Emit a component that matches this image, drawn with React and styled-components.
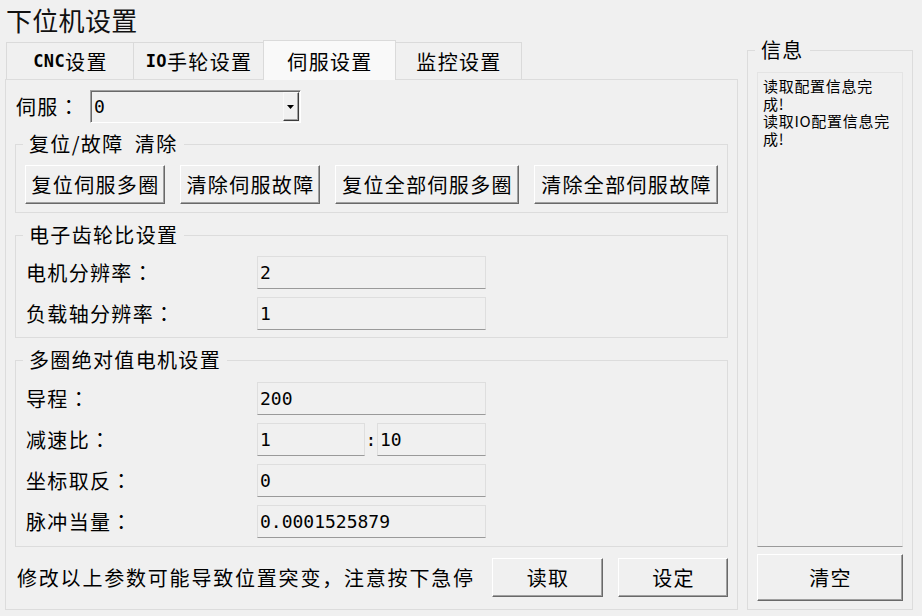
import React from "react";
import styled, { createGlobalStyle } from "styled-components";

const GlobalStyle = createGlobalStyle`
  html, body { margin: 0; padding: 0; background: #f0f0f0; }
  body {
    width: 922px; height: 616px; overflow: hidden;
    font-family: "Noto Sans CJK SC", "Noto Sans", sans-serif;
    color: #000;
  }
  * { box-sizing: border-box; }
`;

const Window = styled.div`
  display: flex;
  align-items: flex-start;
  width: 922px;
  height: 616px;
  padding-left: 5px;
`;

const LeftColumn = styled.div`
  display: flex;
  flex-direction: column;
  width: 733px;
`;

const Title = styled.h1`
  margin: 0;
  height: 40px;
  line-height: 40px;
  padding-left: 1px;
  font-size: 26px;
  font-weight: 400;
  letter-spacing: 0.3px;
  color: #111;
`;

const TabBar = styled.div`
  display: flex;
  align-items: flex-end;
  height: 39px;
  padding-left: 1px;
  position: relative;
  z-index: 1;
`;

const Tab = styled.div`
  display: flex;
  align-items: center;
  justify-content: center;
  width: ${(p) => p.$w}px;
  height: ${(p) => (p.$active ? 40 : 37)}px;
  margin-bottom: ${(p) => (p.$active ? -1 : 0)}px;
  margin-right: -1px;
  background: ${(p) => (p.$active ? "#f9f9f9" : "#f0f0f0")};
  border: 1px solid #dadada;
  border-bottom: none;
  position: relative;
  z-index: ${(p) => (p.$active ? 2 : 1)};
  font-size: 20px;
  letter-spacing: 1.33px;
  padding-left: 1px;
  padding-top: ${(p) => (p.$active ? 2 : 0)}px;
`;

const Latin = styled.span`
  font-family: "DejaVu Sans Mono", "Liberation Mono", monospace;
  font-weight: bold;
  font-size: 17px;
  letter-spacing: 0.4px;
`;

const FullColon = styled.span`
  font-family: "Noto Sans CJK TC", "Noto Sans CJK SC", sans-serif;
`;

const Panel = styled.div`
  display: flex;
  flex-direction: column;
  height: 531px;
  border: 1px solid #dcdcdc;
  background: #f0f0f0;
  padding: 10px 9px 0 9px;
`;

const ServoRow = styled.div`
  display: flex;
  align-items: center;
  height: 33px;
  margin-left: 1px;
`;

const ServoLabel = styled.span`
  width: 74px;
  font-size: 20px;
  letter-spacing: 1.33px;
`;

const Combo = styled.div`
  display: flex;
  align-items: stretch;
  width: 211px;
  height: 33px;
  border: 1px solid;
  border-color: #a0a0a0 #ffffff #ffffff #a0a0a0;
  box-shadow: inset 1px 1px 0 #696969;
  background: #f0f0f0;
  padding: 1px;
`;

const ComboValue = styled.span`
  flex: 1;
  display: flex;
  align-items: center;
  padding-left: 2px;
  font-family: "DejaVu Sans Mono", monospace;
  font-size: 18px;
`;

const ComboArrow = styled.span`
  width: 16px;
  display: flex;
  align-items: center;
  justify-content: center;
  border: 1px solid;
  border-color: #f8f8f8 #3c3c3c #3c3c3c #f8f8f8;
  box-shadow: inset -1px -1px 0 #a0a0a0;
  background: #f0f0f0;
`;

const Group = styled.fieldset`
  margin: ${(p) => p.$mt || 0}px 0 0 0;
  padding: ${(p) => p.$pt}px 9px ${(p) => p.$pb}px 9px;
  border: 1px solid #dcdcdc;
  min-width: 0;
`;

const Legend = styled.legend`
  margin-left: -2px;
  padding: 0 6px;
  font-size: 20px;
  line-height: 22px;
  letter-spacing: 1.33px;
`;

const ButtonRow = styled.div`
  display: flex;
  gap: 15px;
`;

const Button = styled.button`
  width: ${(p) => p.$w}px;
  height: ${(p) => p.$h || 39}px;
  padding: 0 0 0 1px;
  margin: 0;
  font-family: inherit;
  font-size: 20px;
  letter-spacing: 1.33px;
  color: #000;
  background: #f0f0f0;
  border: 1px solid;
  border-color: #ffffff #696969 #696969 #ffffff;
  box-shadow: inset -1px -1px 0 #a0a0a0;
`;

const FieldList = styled.div`
  display: flex;
  flex-direction: column;
  gap: 8px;
`;

const FieldRow = styled.div`
  display: flex;
  align-items: center;
  height: 33px;
`;

const FieldLabel = styled.span`
  width: 232px;
  padding-left: 1px;
  font-size: 20px;
  letter-spacing: 1.33px;
`;

const Input = styled.div`
  display: flex;
  align-items: center;
  width: ${(p) => p.$w || 229}px;
  height: 33px;
  padding-left: 2px;
  border: 1px solid #dedede;
  border-bottom-color: #9a9a9a;
  background: #f0f0f0;
  font-family: "DejaVu Sans Mono", monospace;
  font-size: 18px;
`;

const Colon = styled.span`
  width: 12px;
  text-align: center;
  font-family: "DejaVu Sans Mono", monospace;
  font-size: 18px;
`;

const BottomRow = styled.div`
  display: flex;
  align-items: center;
  justify-content: space-between;
  height: 39px;
  margin-top: 11px;
`;

const Warning = styled.span`
  margin-left: 2px;
  font-size: 20px;
  letter-spacing: 1.8px;
`;

const RightColumn = styled.div`
  width: 166px;
  margin-left: 9px;
  padding-top: 39px;
`;

const InfoGroup = styled.fieldset`
  margin: 0;
  height: 571px;
  padding: 11px 9px 8px 9px;
  border: 1px solid #dcdcdc;
  min-width: 0;
`;

const InfoBody = styled.div`
  display: flex;
  flex-direction: column;
  gap: 7px;
  height: 529px;
`;

const InfoBox = styled.div`
  flex: 1;
  padding: 4px 5px;
  border: 1px solid #e4e4e4;
  border-bottom-color: #9a9a9a;
  background: #f0f0f0;
`;

const InfoLine = styled.div`
  font-size: 15px;
  line-height: 17.5px;
  letter-spacing: 0.7px;
  white-space: nowrap;
`;

const tabs = [
  { w: 128, label: <><Latin>CNC</Latin>设置</> },
  { w: 131, label: <><Latin>IO</Latin>手轮设置</> },
  { w: 133, label: "伺服设置", active: true },
  { w: 127, label: "监控设置" },
];

const Label = ({ children }) => (
  <FieldLabel>
    {children}
    <FullColon>：</FullColon>
  </FieldLabel>
);

export default function App() {
  return (
    <>
      <GlobalStyle />
      <Window>
        <LeftColumn>
          <Title>下位机设置</Title>
          <TabBar>
            {tabs.map((t, i) => (
              <Tab key={i} $w={t.w} $active={t.active}>
                {t.label}
              </Tab>
            ))}
          </TabBar>
          <Panel>
            <ServoRow>
              <ServoLabel>
                伺服<FullColon>：</FullColon>
              </ServoLabel>
              <Combo>
                <ComboValue>0</ComboValue>
                <ComboArrow>
                  <svg width="8" height="4" viewBox="0 0 8 4">
                    <path d="M0 0h7L3.5 4z" fill="#000" />
                  </svg>
                </ComboArrow>
              </Combo>
            </ServoRow>

            <Group $mt={10} $pt={10} $pb={8}>
              <Legend>复位/故障{"\u2002"}清除</Legend>
              <ButtonRow>
                <Button $w={140}>复位伺服多圈</Button>
                <Button $w={140}>清除伺服故障</Button>
                <Button $w={184}>复位全部伺服多圈</Button>
                <Button $w={184}>清除全部伺服故障</Button>
              </ButtonRow>
            </Group>

            <Group $mt={11} $pt={10} $pb={7}>
              <Legend>电子齿轮比设置</Legend>
              <FieldList>
                <FieldRow>
                  <Label>电机分辨率</Label>
                  <Input>2</Input>
                </FieldRow>
                <FieldRow>
                  <Label>负载轴分辨率</Label>
                  <Input>1</Input>
                </FieldRow>
              </FieldList>
            </Group>

            <Group $mt={11} $pt={11} $pb={8}>
              <Legend>多圈绝对值电机设置</Legend>
              <FieldList>
                <FieldRow>
                  <Label>导程</Label>
                  <Input>200</Input>
                </FieldRow>
                <FieldRow>
                  <Label>减速比</Label>
                  <Input $w={108}>1</Input>
                  <Colon>:</Colon>
                  <Input $w={109}>10</Input>
                </FieldRow>
                <FieldRow>
                  <Label>坐标取反</Label>
                  <Input>0</Input>
                </FieldRow>
                <FieldRow>
                  <Label>脉冲当量</Label>
                  <Input>0.0001525879</Input>
                </FieldRow>
              </FieldList>
            </Group>

            <BottomRow>
              <Warning>修改以上参数可能导致位置突变，注意按下急停</Warning>
              <ButtonRow>
                <Button $w={111}>读取</Button>
                <Button $w={110}>设定</Button>
              </ButtonRow>
            </BottomRow>
          </Panel>
        </LeftColumn>

        <RightColumn>
          <InfoGroup>
            <Legend>信息</Legend>
            <InfoBody>
              <InfoBox>
                <InfoLine>读取配置信息完</InfoLine>
                <InfoLine>成!</InfoLine>
                <InfoLine>读取IO配置信息完</InfoLine>
                <InfoLine>成!</InfoLine>
              </InfoBox>
              <Button $w={146} $h={47}>清空</Button>
            </InfoBody>
          </InfoGroup>
        </RightColumn>
      </Window>
    </>
  );
}
